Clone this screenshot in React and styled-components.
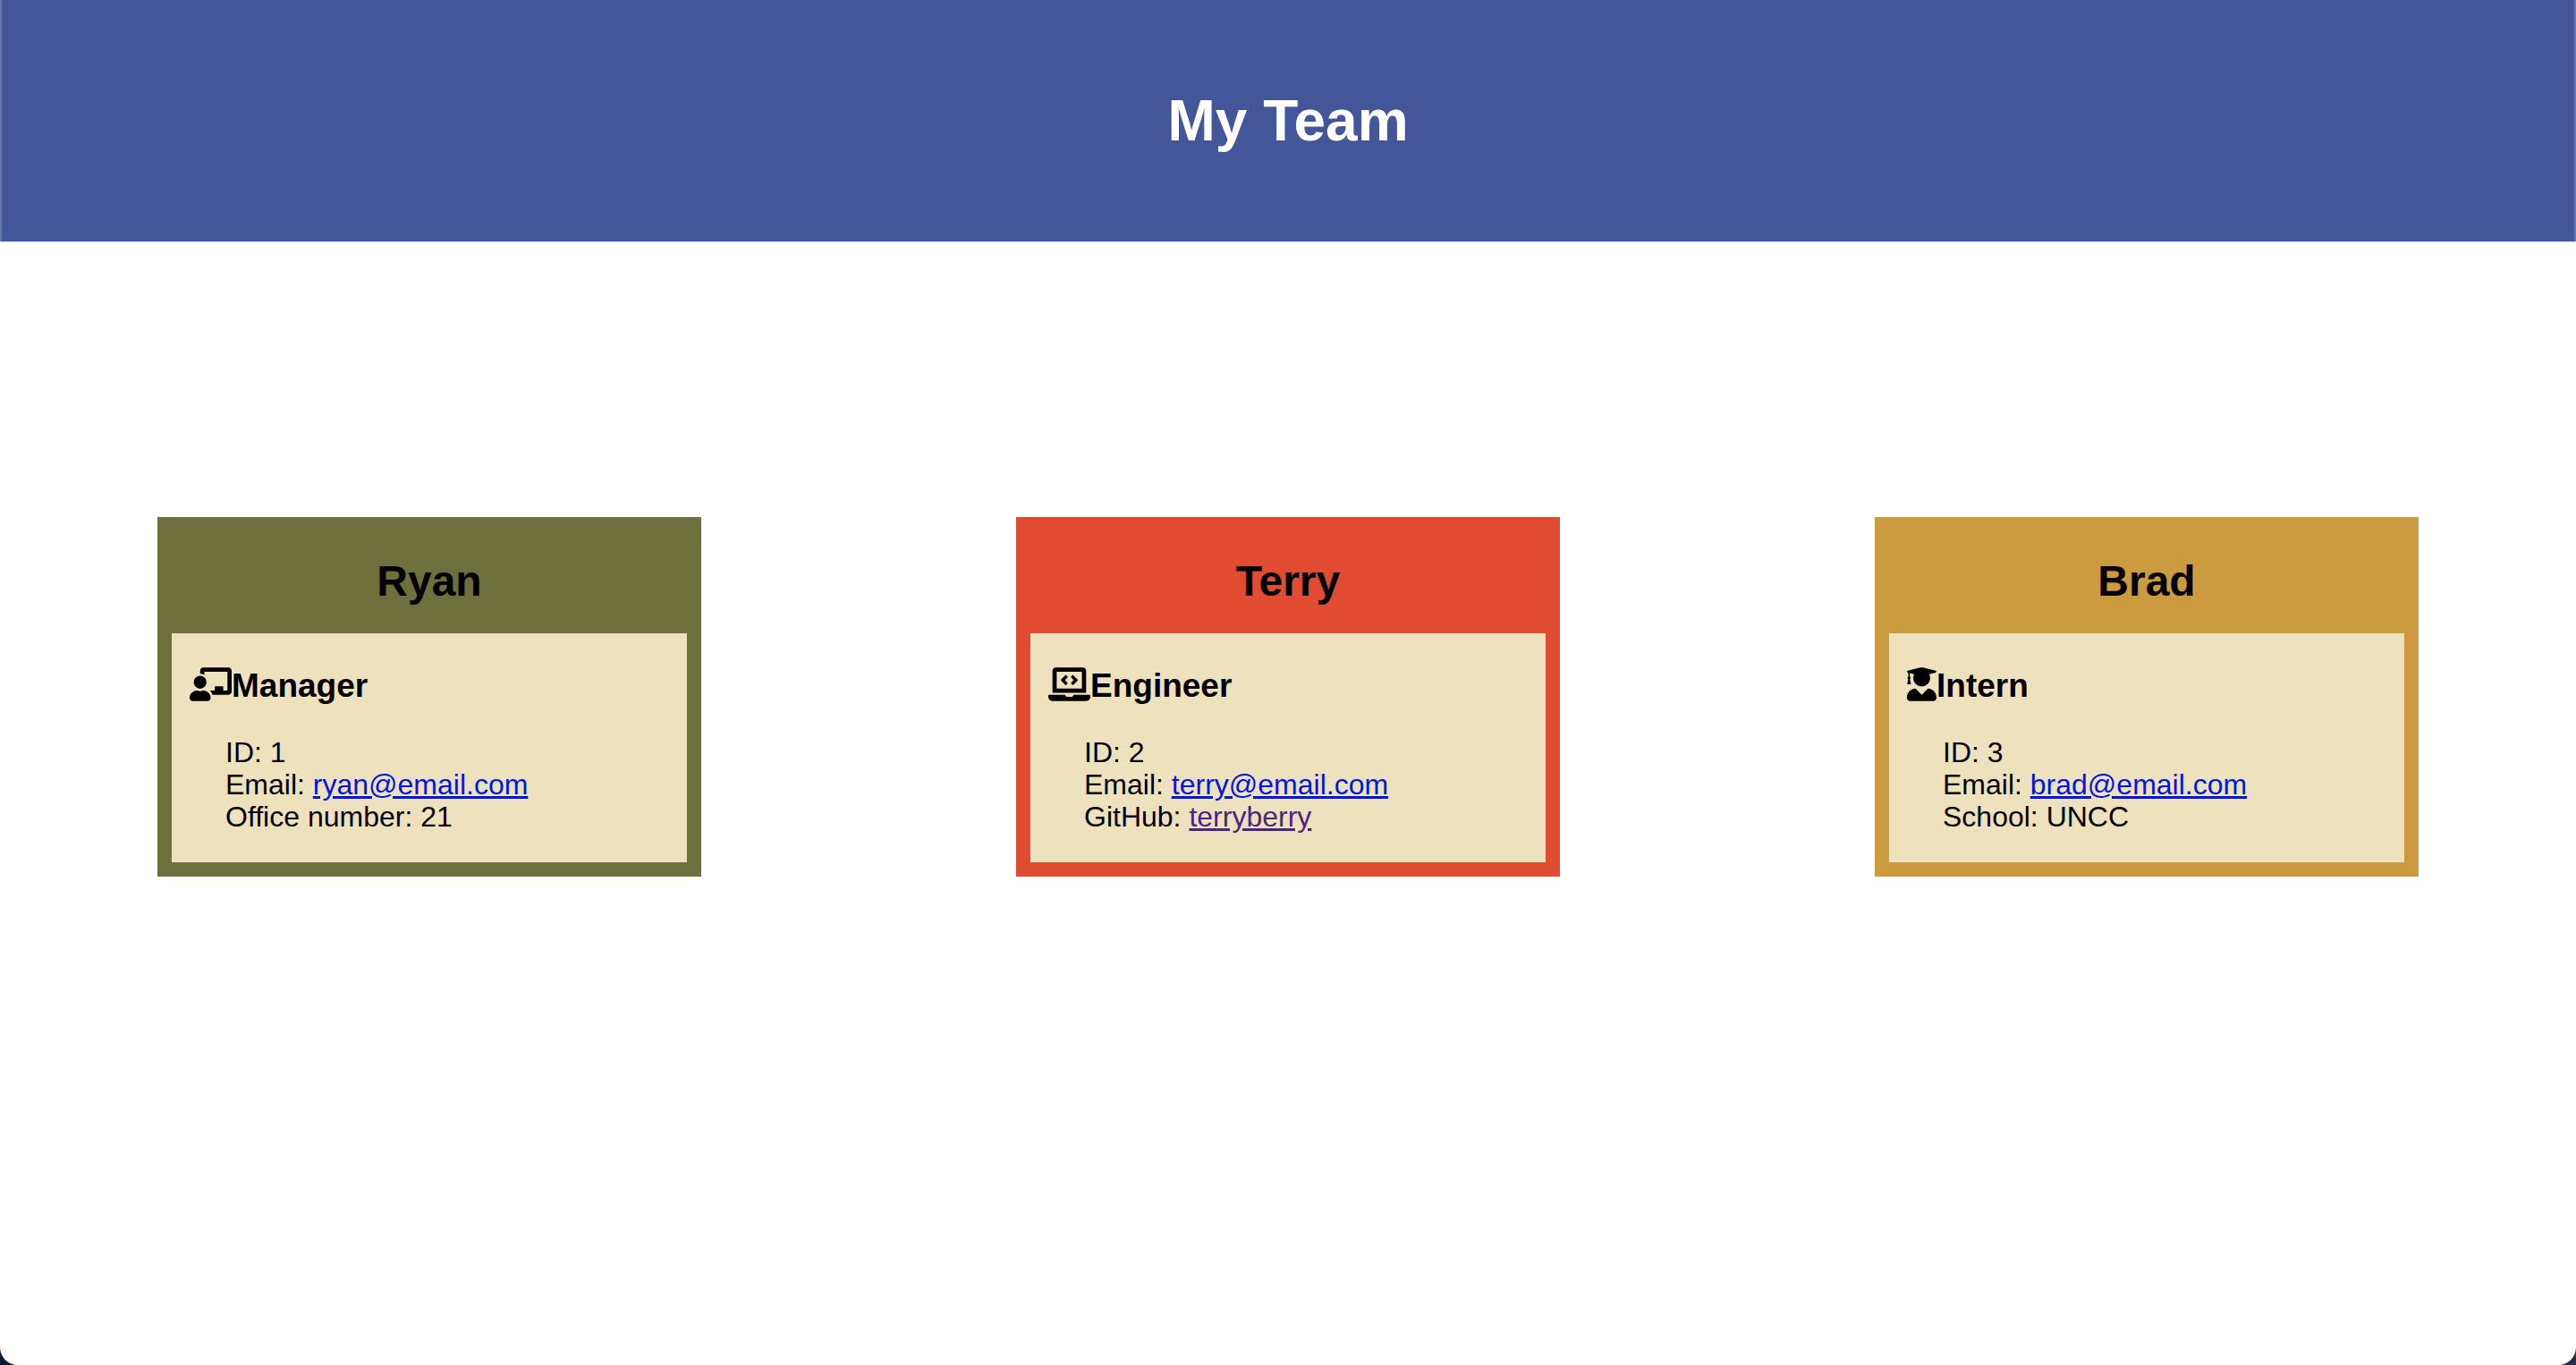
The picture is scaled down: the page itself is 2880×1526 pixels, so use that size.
import React from "react";
import styled, { createGlobalStyle } from "styled-components";
import { FaChalkboardTeacher, FaLaptopCode, FaUserGraduate } from "react-icons/fa";

const GlobalStyle = createGlobalStyle`
  *, *::before, *::after {
    box-sizing: border-box;
  }

  body {
    margin: 0;
    background: linear-gradient(to right, #0b1a33, #2c2b4e);
    color: #000;
    font-family: "Liberation Sans", Helvetica, Arial, sans-serif;
    font-size: 32px;
    line-height: 36px;
  }
`;

const Page = styled.div`
  min-height: 100vh;
  overflow: hidden;
  background: #fff;
  border-radius: 0 0 20px 20px;
`;

const Header = styled.header`
  padding: 98px 24px;
  background: #435699;
  border: solid #6a79b0;
  border-width: 0 2px;
  color: #fff;
  text-align: center;
`;

const Title = styled.h1`
  margin: 0;
  font-size: 64px;
  line-height: 74px;
`;

const Team = styled.main`
  display: grid;
  grid-template-columns: repeat(auto-fit, minmax(640px, 1fr));
  justify-items: center;
  row-gap: 64px;
  padding: 308px 0 64px;
`;

const Card = styled.article`
  width: 100%;
  max-width: 608px;
  padding: 0 16px 16px;
  background: ${({ $color }) => $color};
`;

const Name = styled.h2`
  margin: 0;
  padding: 44px 0 30px;
  font-size: 48px;
  line-height: 56px;
  text-align: center;
`;

const Details = styled.section`
  padding: 38px 20px 33px;
  background: #eee1be;
`;

const Role = styled.h3`
  margin: 0 0 35px;
  font-size: 37px;
  line-height: 42px;

  svg {
    width: ${({ $iconWidth }) => $iconWidth}px;
    height: 38px;
    vertical-align: -5px;
  }
`;

const Facts = styled.ul`
  margin: 0;
  padding: 0 0 0 40px;
  list-style: none;
`;

const Link = styled.a`
  color: ${({ $visited }) => ($visited ? "#4e2483" : "#0016e0")};
`;

const team = [
  {
    name: "Ryan",
    role: "Manager",
    icon: FaChalkboardTeacher,
    iconWidth: 47,
    color: "#6d703d",
    id: 1,
    email: "ryan@email.com",
    extra: "Office number: 21",
  },
  {
    name: "Terry",
    role: "Engineer",
    icon: FaLaptopCode,
    iconWidth: 47,
    color: "#e04b32",
    id: 2,
    email: "terry@email.com",
    extra: (
      <>
        GitHub: <Link $visited href="https://github.com/terryberry">terryberry</Link>
      </>
    ),
  },
  {
    name: "Brad",
    role: "Intern",
    icon: FaUserGraduate,
    iconWidth: 33,
    color: "#cc9b3f",
    id: 3,
    email: "brad@email.com",
    extra: "School: UNCC",
  },
];

function MemberCard({ name, role, icon: Icon, iconWidth, color, id, email, extra }) {
  return (
    <Card $color={color}>
      <Name>{name}</Name>
      <Details>
        <Role $iconWidth={iconWidth}>
          <Icon aria-hidden="true" />
          {role}
        </Role>
        <Facts>
          <li>ID: {id}</li>
          <li>
            Email: <Link href={`mailto:${email}`}>{email}</Link>
          </li>
          <li>{extra}</li>
        </Facts>
      </Details>
    </Card>
  );
}

export default function App() {
  return (
    <>
      <GlobalStyle />
      <Page>
        <Header>
          <Title>My Team</Title>
        </Header>
        <Team>
          {team.map((member) => (
            <MemberCard key={member.id} {...member} />
          ))}
        </Team>
      </Page>
    </>
  );
}
